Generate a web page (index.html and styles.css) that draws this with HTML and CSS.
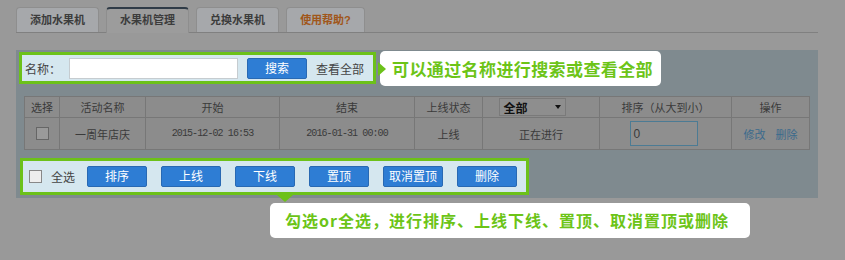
FILE: index.html
```html
<!DOCTYPE html>
<html lang="zh-CN">
<head>
    <meta charset="UTF-8">
    <title>水果机管理</title>
    <link rel="stylesheet" href="styles.css">
</head>
<body>
    <div class="tabs">
        <div class="tab">添加水果机</div>
        <div class="tab active">水果机管理</div>
        <div class="tab">兑换水果机</div>
        <div class="tab help">使用帮助?</div>
    </div>

    <div class="panel">
        <div class="search-bar highlight">
            <span class="label">名称：</span>
            <input class="name-input" type="text">
            <span class="btn search-btn">搜索</span>
            <span class="view-all">查看全部</span>
            <span class="arrow-right"></span>
            <div class="tip tip-search">可以通过名称进行搜索或查看全部</div>
        </div>

        <table class="list">
            <tr class="head">
                <td>选择</td>
                <td>活动名称</td>
                <td>开始</td>
                <td>结束</td>
                <td>上线状态</td>
                <td><span class="select">全部<i class="caret"></i></span></td>
                <td>排序（从大到小）</td>
                <td>操作</td>
            </tr>
            <tr class="row">
                <td><span class="check"></span></td>
                <td>一周年店庆</td>
                <td class="date">2015-12-02 16:53</td>
                <td class="date">2016-01-31 00:00</td>
                <td>上线</td>
                <td>正在进行</td>
                <td><span class="sort-input">0</span></td>
                <td class="ops"><a>修改</a><a>删除</a></td>
            </tr>
        </table>

        <div class="action-wrap">
            <div class="action-bar highlight">
                <span class="check"></span>
                <span class="all">全选</span>
                <span class="btn">排序</span>
                <span class="btn">上线</span>
                <span class="btn">下线</span>
                <span class="btn">置顶</span>
                <span class="btn">取消置顶</span>
                <span class="btn">删除</span>
                <span class="arrow-down"></span>
            </div>
            <div class="tip tip-actions">勾选or全选，进行排序、上线下线、置顶、取消置顶或删除</div>
        </div>
    </div>
</body>
</html>
```

FILE: styles.css
```css
/* page is dimmed by the tutorial overlay, so the colours are the darkened ones */
html, body {
    min-height: 260px;
}
body {
    margin: 0;
    background: #999999;
    font-family: "Liberation Sans", "Noto Sans CJK SC", sans-serif;
    font-size: 12px;
    color: #333;
}

.tabs {
    display: flex;
    gap: 7px;
    margin: 7px 27px 0 16px;
    height: 25px;
    border-bottom: 1px solid #808080;
}
.tab {
    width: 81px;
    height: 24px;
    line-height: 24px;
    text-align: center;
    font-size: 11px;
    font-weight: bold;
    color: #3c3c3c;
    background: #a6a8ab;
    border: 1px solid #8e8e8e;
    border-bottom: none;
    border-radius: 4px 4px 0 0;
}
.tab.active {
    background: #9c9c9c;
    border-top: 2px solid #2f3b47;
    line-height: 23px;
    margin-bottom: -1px;
}
.tab.help {
    width: 77px;
    color: #a0561a;
}

.panel {
    margin: 17px 0 0 16px;
    width: 802px;
    height: 148px;
    background: #7f8a8f;
    padding-top: 2px;
    box-sizing: border-box;
}

.highlight {
    position: relative;
    display: flex;
    align-items: center;
    background: #d5e7ef;
    border: 3px solid #6cc11a;
    box-sizing: border-box;
}

.search-bar {
    margin-left: 3px;
    width: 357px;
    height: 32px;
    padding-left: 3px;
}
.label {
    font-size: 12px;
    color: #444;
    width: 44px;
}
.name-input {
    width: 169px;
    height: 21px;
    border: 1px solid #c6ccd0;
    background: #fff;
    box-sizing: border-box;
    padding: 0;
    margin: 0;
}
.btn {
    display: inline-block;
    width: 60px;
    height: 21px;
    line-height: 21px;
    text-align: center;
    color: #fff;
    font-size: 12px;
    background: #2e7dd4;
    border: 1px solid #2869b3;
    border-radius: 2px;
    box-sizing: border-box;
}
.search-btn {
    margin-left: 9px;
}
.view-all {
    margin-left: 9px;
    color: #444;
    font-size: 12px;
}

.arrow-right {
    position: absolute;
    right: -13px;
    top: 7px;
    border-left: 8px solid #6cc11a;
    border-top: 7px solid transparent;
    border-bottom: 7px solid transparent;
    z-index: 2;
}
.arrow-down {
    position: absolute;
    left: 254px;
    bottom: -10px;
    border-top: 7px solid #6cc11a;
    border-left: 8px solid transparent;
    border-right: 8px solid transparent;
    z-index: 2;
}

.tip {
    position: absolute;
    z-index: 1;
    background: #fff;
    color: #6cc417;
    border-radius: 5px;
    font-family: "Noto Sans CJK SC", sans-serif;
    font-weight: bold;
    white-space: nowrap;
    height: 35px;
    line-height: 35px;
    box-sizing: border-box;
}
.tip-search {
    left: 358px;
    top: -4px;
    width: 281px;
    font-size: 17px;
    padding-left: 12px;
    letter-spacing: 0.4px;
}
.tip-actions {
    left: 250px;
    top: 45px;
    width: 480px;
    font-size: 16px;
    padding-left: 15px;
    letter-spacing: 1px;
}

table.list {
    margin: 12px 0 0 8px;
    width: 786px;
    border-collapse: collapse;
    table-layout: fixed;
    background: #8c8c8c;
    color: #3a3a3a;
    font-size: 11px;
}
table.list td {
    border: 1px solid #777;
    text-align: center;
    padding: 0;
}
table.list tr.head td { height: 20px; }
table.list tr.row td { height: 31px; }
table.list td:nth-child(1) { width: 34px; }
table.list td:nth-child(2) { width: 85px; }
table.list td:nth-child(3) { width: 133px; }
table.list td:nth-child(4) { width: 134px; }
table.list td:nth-child(5) { width: 67px; }
table.list td:nth-child(6) { width: 116px; }
table.list td:nth-child(7) { width: 131px; }
table.list td.date {
    font-family: "Liberation Mono", monospace;
    font-size: 10px;
    letter-spacing: -0.9px;
}

.select {
    display: inline-flex;
    align-items: center;
    justify-content: space-between;
    width: 67px;
    height: 18px;
    box-sizing: border-box;
    padding: 0 4px;
    margin-left: -18px;
    background: #8e8e8e;
    border: 1px solid #7a7a7a;
    color: #111;
    font-size: 12px;
    font-weight: bold;
    text-align: left;
}
.caret {
    border-top: 4px solid #111;
    border-left: 3px solid transparent;
    border-right: 3px solid transparent;
}

.check {
    display: inline-block;
    width: 11px;
    height: 11px;
    border: 1px solid #666;
    background: #9a9a9a;
    vertical-align: middle;
}
.sort-input {
    display: inline-block;
    width: 68px;
    height: 25px;
    line-height: 25px;
    box-sizing: border-box;
    border: 1px solid #4c7b94;
    background: #8f8f8f;
    text-align: left;
    padding-left: 3px;
    font-size: 12px;
    margin-left: -4px;
}
.ops a {
    color: #3a6a8c;
    margin: 0 5px;
}

.action-wrap {
    position: relative;
    margin: 8px 0 0 4px;
}
.action-bar {
    width: 509px;
    height: 37px;
    padding-left: 5px;
    gap: 14px;
}
.action-bar .check {
    border-color: #888;
    background: #eee;
    margin-left: 1px;
}
.action-bar .all {
    color: #444;
    font-size: 12px;
    margin-left: -5px;
    margin-right: -2px;
}
```
